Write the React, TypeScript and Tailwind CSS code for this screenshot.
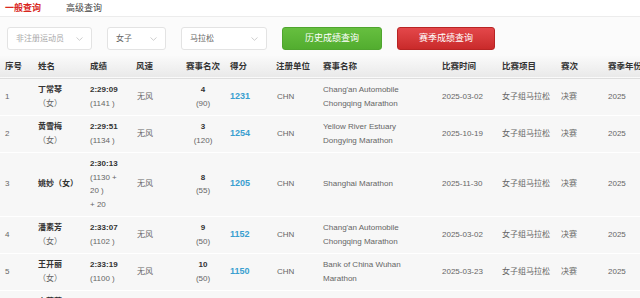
import React from 'react';

type Row = {
  no: string;
  name: string[];
  time: string[];
  wind: string;
  rank: string[];
  score: string;
  unit: string;
  event: string[];
  date: string;
  item: string;
  round: string;
  season: string;
};

const rows: Row[] = [
  { no: '1', name: ['丁常琴', '（女）'], time: ['2:29:09', '(1141 )'], wind: '无风', rank: ['4', '(90)'], score: '1231', unit: 'CHN', event: ["Chang'an Automobile", 'Chongqing Marathon'], date: '2025-03-02', item: '女子组马拉松', round: '决赛', season: '2025' },
  { no: '2', name: ['黄雪梅', '（女）'], time: ['2:29:51', '(1134 )'], wind: '无风', rank: ['3', '(120)'], score: '1254', unit: 'CHN', event: ['Yellow River Estuary', 'Dongying Marathon'], date: '2025-10-19', item: '女子组马拉松', round: '决赛', season: '2025' },
  { no: '3', name: ['姚妙（女）'], time: ['2:30:13', '(1130 +', '20 )', '+ 20'], wind: '无风', rank: ['8', '(55)'], score: '1205', unit: 'CHN', event: ['Shanghai Marathon'], date: '2025-11-30', item: '女子组马拉松', round: '决赛', season: '2025' },
  { no: '4', name: ['潘素芳', '（女）'], time: ['2:33:07', '(1102 )'], wind: '无风', rank: ['9', '(50)'], score: '1152', unit: 'CHN', event: ["Chang'an Automobile", 'Chongqing Marathon'], date: '2025-03-02', item: '女子组马拉松', round: '决赛', season: '2025' },
  { no: '5', name: ['王开丽', '（女）'], time: ['2:33:19', '(1100 )'], wind: '无风', rank: ['10', '(50)'], score: '1150', unit: 'CHN', event: ['Bank of China Wuhan', 'Marathon'], date: '2025-03-23', item: '女子组马拉松', round: '决赛', season: '2025' },
  { no: '6', name: ['李芷萱', '（女）'], time: ['2:33:45', '(1096 )'], wind: '无风', rank: ['5', '(60)'], score: '1156', unit: 'CHN', event: ['Xiamen Marathon'], date: '2025-01-05', item: '女子组马拉松', round: '决赛', season: '2025' },
];

const headers = ['序号', '姓名', '成绩', '风速', '赛事名次', '得分', '注册单位', '赛事名称', '比赛时间', '比赛项目', '赛次', '赛季年份'];
const widths = [33, 52, 46, 50, 44, 46, 47, 119, 60, 59, 47, 77];

function Chevron() {
  return (
    <svg width="7" height="4" viewBox="0 0 7 4" className="shrink-0">
      <path d="M0.5 0.5 L3.5 3.3 L6.5 0.5" fill="none" stroke="#c8c8c8" strokeWidth="0.9" />
    </svg>
  );
}

function Select({ label, width, muted }: { label: string; width: string; muted?: boolean }) {
  return (
    <div className={`${width} h-[23px] bg-white border border-[#e3e3e3] rounded-[3px] flex items-center justify-between pl-[8px] pr-[8px]`}>
      <span className={`text-[8px] ${muted ? 'text-[#a8a8a8]' : 'text-[#666]'}`}>{label}</span>
      <Chevron />
    </div>
  );
}

function Lines({ lines }: { lines: string[] }) {
  return (
    <>
      {lines.map((l, i) => (
        <div key={i}>{l}</div>
      ))}
    </>
  );
}

export default function App() {
  return (
    <div className="w-[640px] h-[298px] overflow-hidden bg-white text-[#666] [font-family:'Liberation_Sans','Noto_Sans_CJK_SC',sans-serif]">
      <div className="h-[17px] flex items-center gap-[25px] pl-[5px] border-b border-[#ececec] text-[9px] leading-none">
        <span className="text-[#d9281f] font-bold">一般查询</span>
        <span className="text-[#444]">高级查询</span>
      </div>

      <div className="flex items-center gap-[15px] pl-[7px] pt-[10px] pb-[6px] bg-[#fbfbfb]">
        <Select label="非注册运动员" width="w-[85px]" muted />
        <Select label="女子" width="w-[59px]" />
        <Select label="马拉松" width="w-[86px]" />
        <button className="w-[100px] h-[23px] rounded-[3px] bg-gradient-to-b from-[#66bf3f] to-[#52ad2f] border border-[#4fa52e] text-white text-[9px]">
          历史成绩查询
        </button>
        <button className="w-[98px] h-[23px] rounded-[3px] bg-gradient-to-b from-[#e4474a] to-[#c92a2a] border border-[#b82424] text-white text-[9px]">
          赛季成绩查询
        </button>
      </div>

      <table className="table-fixed border-collapse w-[680px] text-[8px] leading-[13.5px]">
        <colgroup>
          {widths.map((w, i) => (
            <col key={i} style={{ width: w }} />
          ))}
        </colgroup>
        <thead>
          <tr className="h-[22px] bg-gradient-to-b from-[#fafafa] to-[#e9e9e9] border-b border-[#dedede]">
            {headers.map((h, i) => (
              <th key={h} className={`px-[5px] font-bold text-[8.5px] text-[#333] whitespace-nowrap ${i === 4 ? 'text-center' : 'text-left'}`}>
                {h}
              </th>
            ))}
          </tr>
        </thead>
        <tbody>
          {rows.map(r => (
            <tr key={r.no} className="bg-[#f7f7f7] border-b border-white align-middle">
              <td className="pl-[5px] py-[4.5px]">{r.no}</td>
              <td className="pl-[5px] py-[4.5px] whitespace-nowrap">
                <div className="font-bold text-[#333]">{r.name[0]}</div>
                {r.name[1] && <div>{r.name[1]}</div>}
              </td>
              <td className="pl-[5px] py-[4.5px] whitespace-nowrap">
                <div className="font-bold text-[#333]">{r.time[0]}</div>
                <Lines lines={r.time.slice(1)} />
              </td>
              <td className="pl-[6px] py-[4.5px]">{r.wind}</td>
              <td className="px-[5px] py-[4.5px] text-center">
                <div className="font-bold text-[#333]">{r.rank[0]}</div>
                <div>{r.rank[1]}</div>
              </td>
              <td className="pl-[5px] py-[4.5px] text-[9px] font-bold text-[#3b9fd0]">{r.score}</td>
              <td className="pl-[6px] py-[4.5px]">{r.unit}</td>
              <td className="pl-[5px] py-[4.5px] whitespace-nowrap">
                <Lines lines={r.event} />
              </td>
              <td className="pl-[5px] py-[4.5px]">{r.date}</td>
              <td className="pl-[5px] py-[4.5px] whitespace-nowrap">{r.item}</td>
              <td className="pl-[5px] py-[4.5px]">{r.round}</td>
              <td className="pl-[5px] py-[4.5px]">{r.season}</td>
            </tr>
          ))}
        </tbody>
      </table>
    </div>
  );
}
